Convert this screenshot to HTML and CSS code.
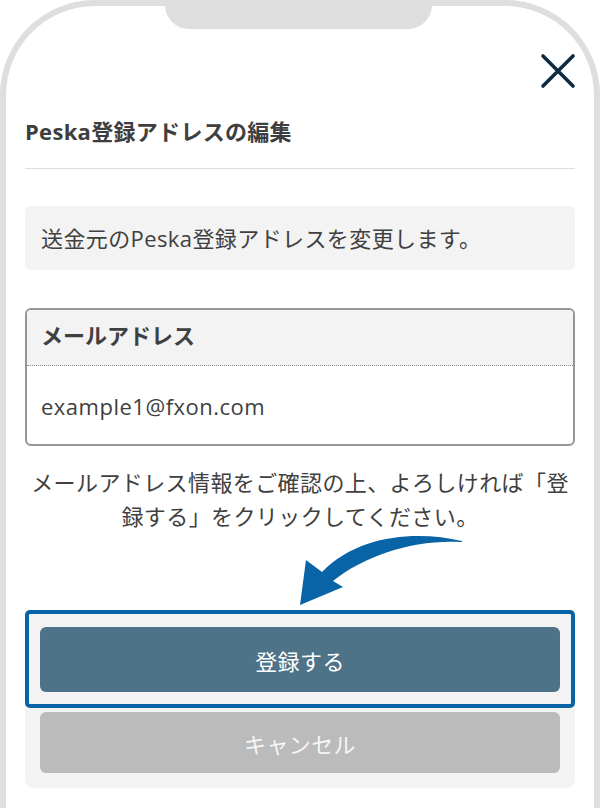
FILE: index.html
```html
<!DOCTYPE html>
<html lang="ja">
<head>
    <meta charset="UTF-8">
    <meta name="viewport" content="width=device-width, initial-scale=1.0">
    <title>Peska登録アドレスの編集</title>
    <link rel="stylesheet" href="styles.css">
</head>
<body>
    <div class="phone">
        <div class="notch"></div>

        <div class="close-row">
            <button class="close" aria-label="閉じる">
                <svg width="36" height="36" viewBox="0 0 36 36">
                    <path d="M3 3 L33 33 M33 3 L3 33" stroke="#0d2b42" stroke-width="3.6" stroke-linecap="round" fill="none"/>
                </svg>
            </button>
        </div>

        <h1 class="modal-title">Peska登録アドレスの編集</h1>

        <p class="notice">送金元のPeska登録アドレスを変更します。</p>

        <div class="field-card">
            <div class="field-head">メールアドレス</div>
            <div class="field-body">example1@fxon.com</div>
        </div>

        <p class="guide">メールアドレス情報をご確認の上、よろしければ「登録する」をクリックしてください。</p>

        <!-- annotation arrow pointing at the submit button -->
        <div class="arrow">
            <svg width="550" height="77" viewBox="0 0 550 77">
                <path d="M437 8 C395 -2 335 0 297 39 L281 27 L275 72 L318 54 L308 48 C340 22 390 6 437 9 Z" fill="#0863a7"/>
            </svg>
        </div>

        <div class="actions">
            <div class="highlight">
                <button class="btn btn-primary">登録する</button>
            </div>
            <button class="btn btn-cancel">キャンセル</button>
        </div>
    </div>
</body>
</html>
```

FILE: styles.css
```css
body {
    margin: 0;
    background: #fff;
    font-family: "Open Sans", "Noto Sans CJK JP", sans-serif;
    color: #404040;
    overflow: hidden;
}
.phone {
    position: relative;
    box-sizing: border-box;
    width: 600px;
    min-height: 900px;
    border: 6px solid #dedede;
    border-bottom: none;
    border-radius: 95px 95px 0 0;
    padding: 0 19px;
}
.notch {
    position: absolute;
    top: -6px;
    left: 159px;
    width: 267px;
    height: 29px;
    background: #dedede;
    border-radius: 0 0 24px 24px;
}
.close-row {
    display: flex;
    justify-content: flex-end;
    margin-top: 47px;
}
.close {
    display: block;
    width: 36px;
    height: 36px;
    padding: 0;
    margin-right: -1px;
    border: none;
    background: none;
}
.close svg {
    display: block;
}
.modal-title {
    margin: 27px 0 0;
    padding-bottom: 22px;
    border-bottom: 1px solid #dddddd;
    font-size: 22px;
    line-height: 30px;
    font-weight: 700;
    letter-spacing: 0.3px;
    color: #3e3e3e;
}
.notice {
    margin: 37px 0 0;
    padding: 17px 16px;
    background: #f3f3f3;
    border-radius: 6px;
    font-size: 22px;
    line-height: 30px;
    letter-spacing: 0.4px;
}
.field-card {
    margin-top: 38px;
    border: 2px solid #959595;
    border-radius: 6px;
    overflow: hidden;
}
.field-head {
    padding: 10px 14px 14px;
    background: #f3f3f3;
    border-bottom: 1px dotted #8f8f8f;
    font-size: 22px;
    line-height: 31px;
    font-weight: 700;
}
.field-body {
    padding: 24px 14px 22px;
    font-size: 22px;
    line-height: 32px;
    letter-spacing: 0.5px;
}
.guide {
    margin: 19px 0 0;
    text-align: center;
    font-size: 22px;
    line-height: 34px;
    letter-spacing: 0.4px;
}
.arrow {
    height: 77px;
}
.arrow svg {
    display: block;
    overflow: visible;
}
.actions {
    background: #f3f3f3;
    border-radius: 0 0 8px 8px;
    padding-bottom: 15px;
}
.highlight {
    border: 4px solid #0863a7;
    border-radius: 5px;
    padding: 13px 11px 12px;
}
.btn {
    display: block;
    box-sizing: border-box;
    width: 100%;
    border: none;
    border-radius: 6px;
    color: #fff;
    font-family: "Open Sans", "Noto Sans CJK JP", sans-serif;
    font-size: 22px;
    letter-spacing: 0.4px;
    padding: 0;
}
.btn-primary {
    height: 65px;
    background: #4e7389;
}
.btn-cancel {
    width: calc(100% - 30px);
    height: 61px;
    margin: 4px 15px 0;
    background: #bbbbbb;
    color: #f6f6f6;
}
```
